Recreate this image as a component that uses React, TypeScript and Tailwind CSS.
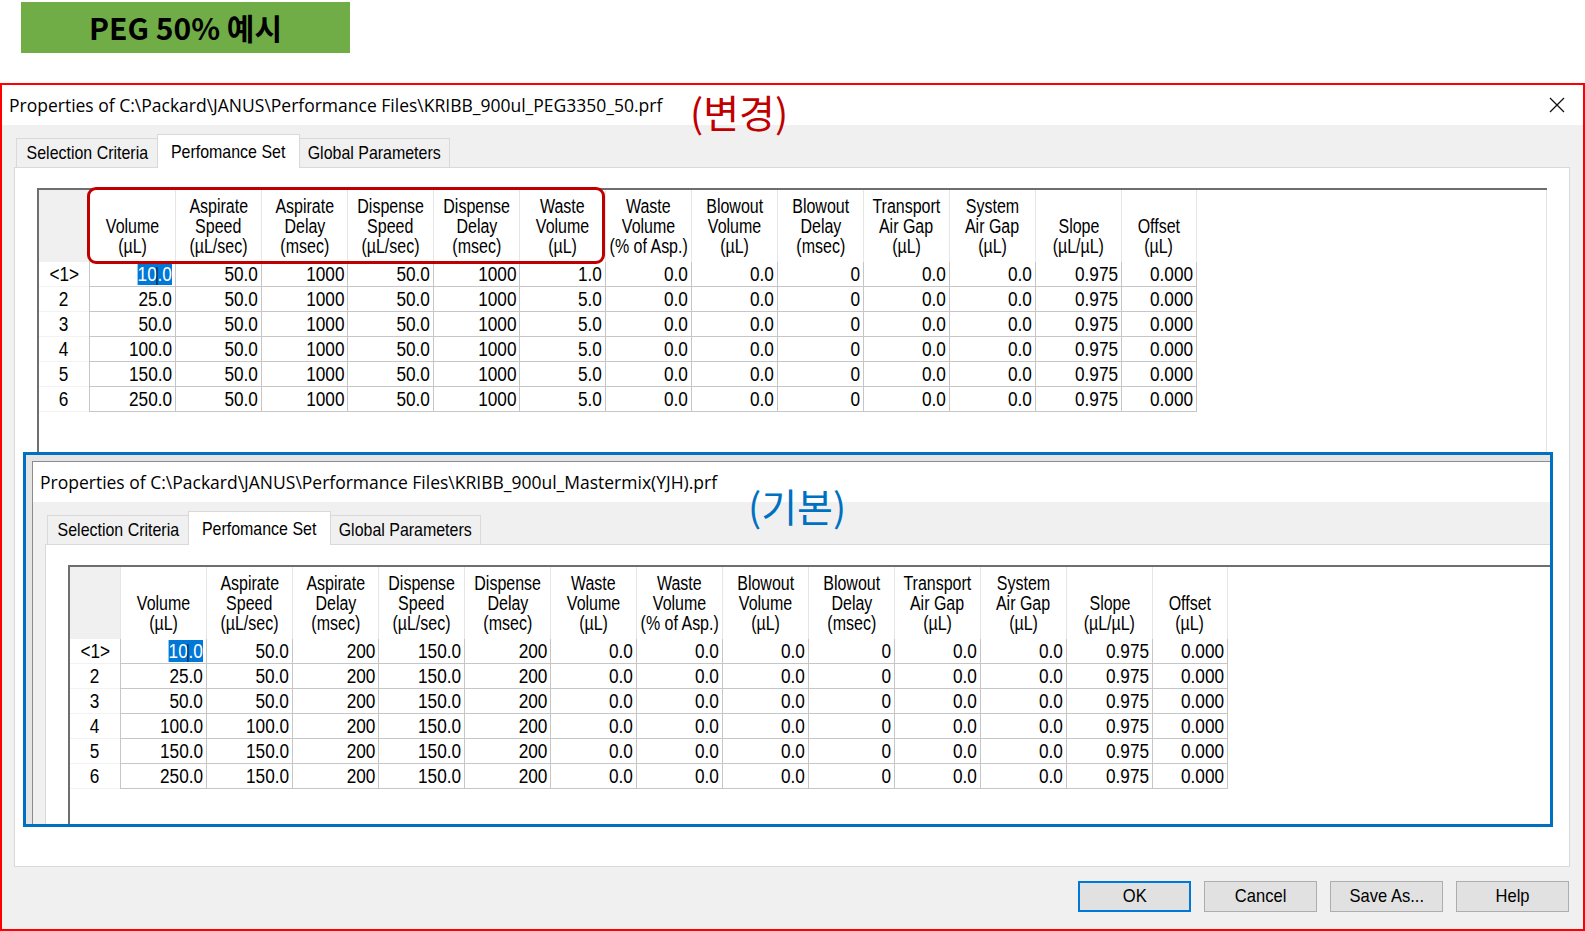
import clsx from "clsx";
import type { ReactNode } from "react";

const headers: string[][] = [
  ["Volume", "(µL)"],
  ["Aspirate", "Speed", "(µL/sec)"],
  ["Aspirate", "Delay", "(msec)"],
  ["Dispense", "Speed", "(µL/sec)"],
  ["Dispense", "Delay", "(msec)"],
  ["Waste", "Volume", "(µL)"],
  ["Waste", "Volume", "(% of Asp.)"],
  ["Blowout", "Volume", "(µL)"],
  ["Blowout", "Delay", "(msec)"],
  ["Transport", "Air Gap", "(µL)"],
  ["System", "Air Gap", "(µL)"],
  ["Slope", "(µL/µL)"],
  ["Offset", "(µL)"],
];

const volumes = ["10.0", "25.0", "50.0", "100.0", "150.0", "250.0"];
const tail = ["0.0", "0.0", "0", "0.0", "0.0", "0.975", "0.000"];

// PEG 50% (changed) vs Mastermix (default)
const changedRows = volumes.map((v, i) => [v, "50.0", "1000", "50.0", "1000", i === 0 ? "1.0" : "5.0", ...tail]);
const baseAsp = ["50.0", "50.0", "50.0", "100.0", "150.0", "150.0"];
const baseRows = volumes.map((v, i) => [v, baseAsp[i], "200", "150.0", "200", "0.0", ...tail]);

// the dialog font is a condensed one, squeeze Liberation Sans to match
const Narrow = ({ children, className }: { children: ReactNode; className: string }) => (
  <span className={clsx("inline-block whitespace-nowrap", className)}>{children}</span>
);

const Grid = ({ rows }: { rows: string[][] }) => {
  return (
    <div className="flex h-[281px] w-[1510px] flex-col border-l-2 border-t-2 border-[#6e6e6e] bg-white text-black">
      <div className="flex-1 border-r border-[#e3e3e3]">
        {/* header */}
        <div className="flex h-[72px] text-[19.5px]">
          <div className="w-[50px] shrink-0 bg-[#f0f0f0]" />
          {headers.map((h, i) => (
            <div
              key={i}
              className={clsx(
                "flex shrink-0 flex-col items-center justify-end border-l border-[#e6e6e6] pb-[6px] leading-[20px]",
                i === 12 ? "w-[76px] border-r" : "w-[86px]"
              )}
            >
              {h.map((line) => (
                <Narrow key={line} className="origin-center scale-x-[0.82]">
                  {line}
                </Narrow>
              ))}
            </div>
          ))}
        </div>

        {/* rows */}
        {rows.map((r, ri) => (
          <div key={ri} className="flex h-[25px] text-[20px]">
            <div className="flex w-[50px] shrink-0 justify-center border-b border-[#f2f2f2] leading-[25px]">
              <Narrow className="origin-center scale-x-[0.86]">{ri === 0 ? "<1>" : ri + 1}</Narrow>
            </div>
            {r.map((c, ci) => (
              <div
                key={ci}
                className={clsx(
                  "flex shrink-0 justify-end border-b border-l border-[#c6c6c6] pr-[3px] leading-[24px]",
                  ci === 12 ? "w-[76px] border-r" : "w-[86px]"
                )}
              >
                <Narrow className="origin-right scale-x-[0.86]">
                  {ri === 0 && ci === 0 ? (
                    <span className="bg-[#0078d7] text-white">
                      10
                      <span className="inline-block h-[18px] w-px bg-black align-middle" />
                      .0
                    </span>
                  ) : (
                    c
                  )}
                </Narrow>
              </div>
            ))}
          </div>
        ))}
      </div>

      {/* horizontal scrollbar */}
      <div className="flex h-[17px] border-t border-[#d6d6d6] bg-[#e8e8e8]">
        <div className="w-[4px]" />
        <div className="w-[25px] bg-[#cdcdcd]" />
        <div className="ml-[15px] w-[3px] border-x border-[#555]" />
        <div className="ml-[130px] w-[1000px] bg-[#dadada]" />
      </div>
    </div>
  );
};

const Button = ({ label, primary }: { label: string; primary?: boolean }) => (
  <div
    className={clsx(
      "flex h-[31px] w-[113px] items-center justify-center bg-[#e1e1e1] text-[19px] text-black",
      primary ? "border-2 border-[#0078d7]" : "border border-[#adadad]"
    )}
  >
    <Narrow className="origin-center scale-x-[0.87]">{label}</Narrow>
  </div>
);

const Dialog = ({ title, rows, full }: { title: string; rows: string[][]; full?: boolean }) => {
  return (
    <div className={clsx("flex w-[1581px] flex-col bg-[#f0f0f0]", full ? "h-[844px]" : "h-[380px] overflow-hidden")}>
      {/* title bar */}
      <div className="flex h-[40px] shrink-0 items-center justify-between bg-white pl-[7px] pr-[18px]">
        <span className="font-['Open_Sans',sans-serif] text-[17.5px] text-black">{title}</span>
        {full && (
          <svg width="16" height="16" viewBox="0 0 16 16">
            <path d="M1 1 L15 15 M15 1 L1 15" stroke="#111" strokeWidth="1.3" fill="none" />
          </svg>
        )}
      </div>

      {/* tabs */}
      <div className="mt-[9px] flex h-[33px] shrink-0 items-end pl-[14px] text-[19px] text-black">
        <div className="flex h-[29px] w-[141px] items-center justify-center border-l border-t border-[#d9d9d9] bg-[#f0f0f0]">
          <Narrow className="origin-center scale-x-[0.84]">Selection Criteria</Narrow>
        </div>
        <div className="relative z-10 -mb-px flex h-[34px] w-[143px] items-start justify-center border-x border-t border-[#d9d9d9] bg-white pt-[3px]">
          <Narrow className="origin-center scale-x-[0.84]">Perfomance Set</Narrow>
        </div>
        <div className="flex h-[29px] w-[150px] items-center justify-center border-r border-t border-[#d9d9d9] bg-[#f0f0f0]">
          <Narrow className="origin-center scale-x-[0.84]">Global Parameters</Narrow>
        </div>
      </div>

      {/* tab panel */}
      <div className="ml-[12px] h-[700px] w-[1556px] shrink-0 border border-[#d9d9d9] bg-white pl-[22px] pt-[20px]">
        <Grid rows={rows} />
      </div>

      {/* buttons */}
      {full && (
        <div className="mt-[14px] flex justify-end gap-[13px] pr-[14px]">
          <Button label="OK" primary />
          <Button label="Cancel" />
          <Button label="Save As..." />
          <Button label="Help" />
        </div>
      )}
    </div>
  );
};

const App = () => {
  return (
    <div className="relative h-[931px] w-[1585px] overflow-hidden bg-white font-['Liberation_Sans',sans-serif]">
      {/* label */}
      <div className="ml-[21px] mt-[2px] flex h-[51px] w-[329px] items-center justify-center bg-[#70ad47] font-['Noto_Sans_CJK_KR',sans-serif] text-[30px] font-bold text-black">
        PEG 50% 예시
      </div>

      {/* captured dialog, framed in red */}
      <div className="mt-[30px] h-[848px] w-[1585px] border-2 border-[#ff0000]">
        <Dialog
          title="Properties of C:\Packard\JANUS\Performance Files\KRIBB_900ul_PEG3350_50.prf"
          rows={changedRows}
          full
        />
      </div>

      {/* annotations */}
      <div className="absolute left-[690px] top-[92px] font-['Noto_Sans_CJK_KR',sans-serif] text-[39px] leading-none text-[#c00000]">
        (변경)
      </div>
      <div className="absolute left-[87px] top-[187px] h-[77px] w-[518px] rounded-[9px] border-[3px] border-[#c00000]" />

      {/* default settings screenshot overlaid, framed in blue */}
      <div className="absolute left-[23px] top-[452px] h-[375px] w-[1530px] overflow-hidden border-[3px] border-[#0070c0] bg-[#e4e4e4]">
        <div className="absolute left-[6px] top-[6px] border-l border-t border-[#8c8c8c]">
          <Dialog
            title="Properties of C:\Packard\JANUS\Performance Files\KRIBB_900ul_Mastermix(YJH).prf"
            rows={baseRows}
          />
        </div>
      </div>
      <div className="absolute left-[748px] top-[486px] font-['Noto_Sans_CJK_KR',sans-serif] text-[39px] leading-none text-[#0070c0]">
        (기본)
      </div>
    </div>
  );
};

export default App;
